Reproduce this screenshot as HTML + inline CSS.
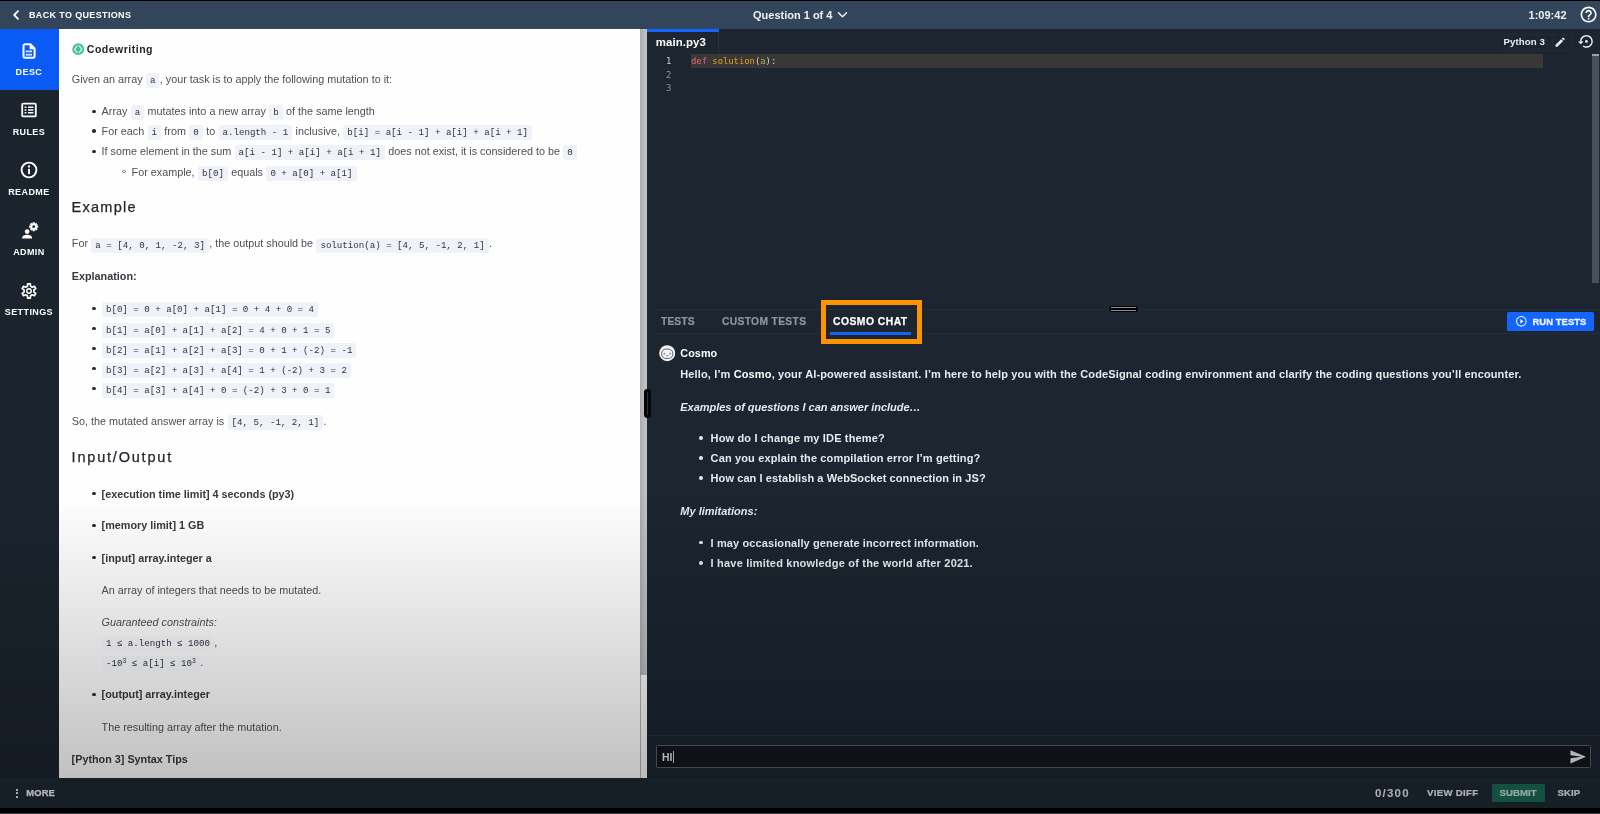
<!DOCTYPE html>
<html lang="en">
<head>
<meta charset="utf-8">
<title>CodeSignal IDE</title>
<style>
*{box-sizing:border-box;margin:0;padding:0}
html,body{width:1600px;height:814px;overflow:hidden;background:#000}
body{position:relative;font-family:"Liberation Sans",sans-serif;color:#fff;-webkit-font-smoothing:antialiased}
.abs{position:absolute}
#app{position:absolute;left:0;top:0;width:1600px;height:814px;will-change:transform;opacity:.999}
.g{font-family:"Liberation Sans",sans-serif;font-weight:bold}
/* header */
#hdr{left:0;top:1px;width:1600px;height:28.3px;background:#34465b}
#hdr .t{position:absolute;white-space:nowrap;line-height:28px;top:-.4px}
/* sidebar */
#side{left:0;top:29px;width:59px;height:749px;background:#1c252e}
.si{position:absolute;left:0;width:59px;height:60px;text-align:center}
.si.on{background:#0b5cf6}
.si svg{position:absolute;left:28.9px;top:13px;transform:translateX(-50%)}
.si span{position:absolute;left:-.6px;width:59px;top:37px;font-size:9px;font-weight:bold;letter-spacing:.4px;line-height:12px}
/* description */
#desc{left:59px;top:29px;width:581px;height:749px;background:#fff;color:#4d5258;font-size:10.8px;overflow:hidden}
#desc .l{position:absolute;white-space:nowrap;line-height:14px}
#desc code{font-family:"Liberation Mono",monospace;font-size:9.14px;background:#f0f3f9;border-radius:2.5px;padding:1.8px 4px 2.3px;margin:0 .35px;color:#30353b}
#desc h2{position:absolute;-webkit-text-stroke:.25px #23282e;font-size:14.5px;font-weight:normal;color:#23282e;white-space:nowrap;line-height:18px}
#desc b{color:#363b41}
#desc .dot{position:absolute;width:3.4px;height:3.4px;border-radius:50%;background:#2b3036}
#desc .ring{position:absolute;width:3.6px;height:3.6px;border-radius:50%;border:.8px solid #6a6f75}
#desc sup{font-size:6.5px;vertical-align:baseline;position:relative;top:-3.2px}
#split{left:640px;top:29px;width:7.3px;height:749px;background:#f8f8f8;border-left:1px solid #b4b4b4}
/* editor */
#ed{left:647px;top:29px;width:953px;height:749px;background:#1d2631}
.t{white-space:nowrap;line-height:12px}
.code{font-family:"DejaVu Sans Mono",monospace;font-size:8.85px;line-height:13.5px;white-space:pre}
.ch{font-size:11px;font-weight:bold;line-height:14px;white-space:nowrap;color:#e9ebee;letter-spacing:.08px}
.ch b{color:#fff}
#foot{left:0;top:778px;width:1600px;height:30.1px;background:#1f2934}
#ov{will-change:transform;left:0;top:0;width:1600px;height:808px;pointer-events:none;background:linear-gradient(to bottom,rgba(0,0,0,0) 498px,rgba(0,0,0,.245) 782px)}
</style>
</head>
<body>
<div id="app">
<div id="hdr" class="abs">
<svg class="abs" style="left:11.6px;top:8.2px" width="8" height="12" viewBox="0 0 8 12"><path d="M6 2.2 L2.2 6 L6 9.8" fill="none" stroke="#fff" stroke-width="1.8" stroke-linecap="round" stroke-linejoin="round"/></svg>
<div class="t g" style="left:29px;font-size:9px;letter-spacing:.35px">BACK TO QUESTIONS</div>
<div class="t g" style="left:753px;font-size:11px;color:#eef1f4">Question 1 of 4</div>
<svg class="abs" style="left:837px;top:10px" width="11" height="8" viewBox="0 0 11 8"><path d="M1.5 1.8 L5.5 5.8 L9.5 1.8" fill="none" stroke="#eef1f4" stroke-width="1.5" stroke-linecap="round" stroke-linejoin="round"/></svg>
<div class="t g" style="left:1528.6px;font-size:11px;color:#eef1f4">1:09:42</div>
<svg class="abs" style="left:1578.7px;top:4.4px" width="19.2" height="19.2" viewBox="0 0 24 24"><path fill="#fff" d="M11 18h2v-2h-2v2zm1-16C6.480 2 2 6.480 2 12s4.480 10 10 10 10-4.480 10-10S17.520 2 12 2zm0 18c-4.410 0-8-3.590-8-8s3.590-8 8-8 8 3.590 8 8-3.590 8-8 8zm0-14c-2.210 0-4 1.790-4 4h2c0-1.100.9-2 2-2s2 .9 2 2c0 2-3 1.750-3 5h2c0-2.250 3-2.500 3-5 0-2.210-1.790-4-4-4z"/></svg>
</div>
<div id="side" class="abs">
<div class="si on" style="top:0;height:60.5px"><svg width="14" height="16.4" viewBox="0 0 14 16.4" style="left:29.3px;top:13.9px"><path d="M3 1.3 h5.4 l4.2 4.2 v7.8 a1.5 1.5 0 0 1 -1.5 1.5 h-8.1 a1.5 1.5 0 0 1 -1.5 -1.5 v-10.5 a1.5 1.5 0 0 1 1.5 -1.500 z" fill="none" stroke="#fff" stroke-width="2" stroke-linejoin="round"/><path d="M8 1.3 L12.6 5.900 H8 Z" fill="#fff" stroke="#fff" stroke-width=".8" stroke-linejoin="round"/><rect x="3.7" y="7.5" width="6.3" height="1.8" fill="#cbe4ff"/><rect x="3.7" y="10.8" width="6.3" height="1.8" fill="#cbe4ff"/></svg><span>DESC</span></div>
<div class="si" style="top:60px"><svg width="16" height="16" viewBox="0 0 16 16"><rect x="1.2" y="1.6" width="13.6" height="12.8" rx="1" fill="none" stroke="#fff" stroke-width="1.8"/><path d="M3.6 5.2h1.8M3.6 8h1.8M3.6 10.8h1.8M7 5.2h5.4M7 8h5.4M7 10.8h5.4" stroke="#fff" stroke-width="1.5"/></svg><span>RULES</span></div>
<div class="si" style="top:120px"><svg width="18" height="18" viewBox="0 0 17 17" style="top:12.4px"><circle cx="8.5" cy="8.5" r="7" fill="none" stroke="#fff" stroke-width="1.8"/><rect x="7.6" y="7.4" width="1.8" height="5" fill="#fff"/><circle cx="8.5" cy="5.2" r="1.1" fill="#fff"/></svg><span>README</span></div>
<div class="si" style="top:180px"><svg width="18" height="18" viewBox="0 0 18 18" style="left:29.8px;top:13.4px"><circle cx="6.1" cy="9.6" r="2.3" fill="#fff"/><path d="M1.1 16.4 c0-2.9 2.2-3.7 5-3.7 s5 .8 5 3.7 z" fill="#fff"/><g transform="translate(12.7 4.7)"><path d="M-0.90 -3.18 L-0.86 -4.32 L0.86 -4.32 L0.90 -3.18 L1.61 -2.88 L2.44 -3.66 L3.66 -2.44 L2.88 -1.61 L3.18 -0.90 L4.32 -0.86 L4.32 0.86 L3.18 0.90 L2.88 1.61 L3.66 2.44 L2.44 3.66 L1.61 2.88 L0.90 3.18 L0.86 4.32 L-0.86 4.32 L-0.90 3.18 L-1.61 2.88 L-2.44 3.66 L-3.66 2.44 L-2.88 1.61 L-3.18 0.90 L-4.32 0.86 L-4.32 -0.86 L-3.18 -0.90 L-2.88 -1.61 L-3.66 -2.44 L-2.44 -3.66 L-1.61 -2.88 Z" fill="#fff" stroke="#fff" stroke-width=".5" stroke-linejoin="round"/><circle r="1.35" fill="#1c252e"/></g></svg><span>ADMIN</span></div>
<div class="si" style="top:240px"><svg width="18" height="18" viewBox="0 0 18 18"><g transform="translate(9 9)"><path d="M-1.59 -4.74 L-1.35 -7.07 L1.35 -7.07 L1.59 -4.74 L3.31 -3.75 L5.45 -4.70 L6.80 -2.37 L4.90 -0.99 L4.90 0.99 L6.80 2.37 L5.45 4.70 L3.31 3.75 L1.59 4.74 L1.35 7.07 L-1.35 7.07 L-1.59 4.74 L-3.31 3.75 L-5.45 4.70 L-6.80 2.37 L-4.90 0.99 L-4.90 -0.99 L-6.80 -2.37 L-5.45 -4.70 L-3.31 -3.75 Z" fill="none" stroke="#fff" stroke-width="1.7" stroke-linejoin="round"/><circle r="2.2" fill="none" stroke="#fff" stroke-width="1.5"/></g></svg><span>SETTINGS</span></div>
</div>
<div id="desc" class="abs">
<svg class="abs" style="left:12.9px;top:14.2px" width="12.4" height="12.4" viewBox="-6.2 -6.2 12.4 12.4"><circle r="5.9" fill="#46bd9d"/><path d="M-1.2 -3.3 L-3.6 0 L-1.2 3.3 M1.2 -3.3 L3.6 0 L1.2 3.3" fill="none" stroke="#b9f5e4" stroke-width="1.5" stroke-linejoin="round" stroke-linecap="round"/></svg>
<div class="l" style="left:27.8px;top:13.3px;font-size:10.5px;font-weight:bold;color:#22262c;letter-spacing:.5px">Codewriting</div>
<div class="l" style="left:12.8px;top:42.8px">Given an array <code>a</code>, your task is to apply the following mutation to it:</div>
<i class="dot" style="left:33.4px;top:80.5px"></i><div class="l" style="left:42.6px;top:75.0px">Array <code>a</code> mutates into a new array <code>b</code> of the same length</div>
<i class="dot" style="left:33.4px;top:100.4px"></i><div class="l" style="left:42.6px;top:94.9px">For each <code>i</code> from <code>0</code> to <code>a.length - 1</code> inclusive, <code>b[i] = a[i - 1] + a[i] + a[i + 1]</code></div>
<i class="dot" style="left:33.4px;top:120.5px"></i><div class="l" style="left:42.6px;top:115.0px">If some element in the sum <code>a[i - 1] + a[i] + a[i + 1]</code> does not exist, it is considered to be <code>0</code></div>
<i class="ring" style="left:63.4px;top:140.9px"></i><div class="l" style="left:72.6px;top:135.6px">For example, <code>b[0]</code> equals <code>0 + a[0] + a[1]</code></div>
<h2 style="left:12.6px;top:169.2px;letter-spacing:1.25px">Example</h2>
<div class="l" style="left:12.8px;top:207.4px">For <code>a = [4, 0, 1, -2, 3]</code>, the output should be <code>solution(a) = [4, 5, -1, 2, 1]</code>.</div>
<div class="l" style="left:12.8px;top:239.7px"><b>Explanation:</b></div>
<i class="dot" style="left:33.4px;top:277.7px"></i><div class="l" style="left:42.6px;top:272.2px"><code>b[0] = 0 + a[0] + a[1] = 0 + 4 + 0 = 4</code></div>
<i class="dot" style="left:33.4px;top:297.8px"></i><div class="l" style="left:42.6px;top:292.3px"><code>b[1] = a[0] + a[1] + a[2] = 4 + 0 + 1 = 5</code></div>
<i class="dot" style="left:33.4px;top:317.9px"></i><div class="l" style="left:42.6px;top:312.4px"><code>b[2] = a[1] + a[2] + a[3] = 0 + 1 + (-2) = -1</code></div>
<i class="dot" style="left:33.4px;top:338.0px"></i><div class="l" style="left:42.6px;top:332.5px"><code>b[3] = a[2] + a[3] + a[4] = 1 + (-2) + 3 = 2</code></div>
<i class="dot" style="left:33.4px;top:358.1px"></i><div class="l" style="left:42.6px;top:352.6px"><code>b[4] = a[3] + a[4] + 0 = (-2) + 3 + 0 = 1</code></div>
<div class="l" style="left:12.8px;top:384.6px">So, the mutated answer array is <code>[4, 5, -1, 2, 1]</code>.</div>
<h2 style="left:12.6px;top:418.8px;letter-spacing:1.8px">Input/Output</h2>
<i class="dot" style="left:33.4px;top:463.0px"></i><div class="l" style="left:42.6px;top:457.5px"><b>[execution time limit] 4 seconds (py3)</b></div>
<i class="dot" style="left:33.4px;top:494.8px"></i><div class="l" style="left:42.6px;top:489.3px"><b>[memory limit] 1 GB</b></div>
<i class="dot" style="left:33.4px;top:527.1px"></i><div class="l" style="left:42.6px;top:521.6px"><b>[input] array.integer a</b></div>
<div class="l" style="left:42.6px;top:553.7px">An array of integers that needs to be mutated.</div>
<div class="l" style="left:42.6px;top:585.7px"><em>Guaranteed constraints:</em></div>
<div class="l" style="left:42.6px;top:605.6px"><code style="background:#fbfcff">1 ≤ a.length ≤ 1000</code>,</div>
<div class="l" style="left:42.6px;top:626.0px"><code style="background:#fbfcff">-10<sup>3</sup> ≤ a[i] ≤ 10<sup>3</sup></code>.</div>
<i class="dot" style="left:33.4px;top:663.8px"></i><div class="l" style="left:42.6px;top:658.3px"><b>[output] array.integer</b></div>
<div class="l" style="left:42.6px;top:690.7px">The resulting array after the mutation.</div>
<div class="l" style="left:12.6px;top:722.8px"><b>[Python 3] Syntax Tips</b></div>
</div>
<div id="split" class="abs"><div class="abs" style="left:-1px;top:0;width:7.3px;height:646.4px;background:linear-gradient(to right,#a7a9ac,#b6b8bb 40%,#c2c4c6)"></div></div>
<div class="abs" style="z-index:5;left:644px;top:389px;width:6.6px;height:28.8px;border-radius:3.3px;background:#050608"><div class="abs" style="left:2.6px;top:2.5px;width:1.4px;height:23.8px;background:#2b3035"></div></div>
<div id="ed" class="abs">
<div class="abs" style="left:0;top:.2px;width:71.5px;height:3.3px;background:#1466ff"></div>
<div class="abs" style="left:71px;top:3px;width:1px;height:22px;background:#27323d"></div>
<div class="abs g t" style="left:8.8px;top:7.2px;font-size:11.4px;letter-spacing:.1px">main.py3</div>
<div class="abs" style="left:850.5px;top:4.5px;width:75.5px;height:17px;border:1px solid #232d38;border-radius:2px"></div>
<div class="abs" style="left:904.6px;top:5px;width:1px;height:16px;background:#222c37"></div>
<div class="abs g t" style="left:856.6px;top:7.4px;font-size:9.7px;color:#eceef1;letter-spacing:.05px">Python 3</div>
<svg class="abs" style="left:907.1px;top:7px" width="12.24" height="12.24" viewBox="0 0 24 24"><path fill="#eceef1" d="M3 17.250V21h3.750L17.810 9.940l-3.750-3.750L3 17.250zM20.710 7.040c.39-.39.39-1.020 0-1.410l-2.340-2.340c-.39-.39-1.020-.39-1.410 0l-1.830 1.830 3.750 3.750 1.830-1.830z"/></svg>
<svg class="abs" style="left:930.7px;top:4.3px" width="16.9" height="16.9" viewBox="0 0 24 24"><path fill="#eceef1" d="M14 12c0-1.1-.9-2-2-2s-2 .9-2 2 .9 2 2 2 2-.9 2-2zm-2-9c-4.97 0-9 4.03-9 9H0l4 4 4-4H5c0-3.870 3.130-7 7-7s7 3.130 7 7-3.130 7-7 7c-1.510 0-2.910-.49-4.060-1.300l-1.420 1.440C8.040 20.300 9.940 21 12 21c4.970 0 9-4.030 9-9s-4.030-9-9-9z"/></svg>
<div class="abs" style="left:43.6px;top:25px;width:852.4px;height:13.5px;background:#3a3938"></div>
<div class="abs code" style="left:19px;top:26.4px;color:#c9ced3">1</div>
<div class="abs code" style="left:19px;top:39.9px;color:#8e969e">2</div>
<div class="abs code" style="left:19px;top:53.4px;color:#8e969e">3</div>
<div class="abs code" style="left:44px;top:26.4px"><span style="color:#e26877">def</span> <span style="color:#e6a023">solution</span><span style="color:#d9d6c4">(</span><span style="color:#a9b665">a</span><span style="color:#d9d6c4">):</span></div>
<div class="abs" style="left:945.3px;top:25px;width:7px;height:229px;background:#48525d"></div>
<div class="abs" style="left:945.3px;top:25px;width:7px;height:2.2px;background:#9aa2aa"></div>
<div class="abs" style="left:6px;top:279.5px;width:947px;height:1px;background:#242f3c"></div>
<div class="abs" style="left:462px;top:276.9px;width:28.9px;height:6.6px;border-radius:3.3px;background:#030405"></div>
<div class="abs" style="left:464.4px;top:278.3px;width:24.4px;height:.7px;background:#8a8f96"></div>
<div class="abs" style="left:464.4px;top:281.3px;width:24.4px;height:.7px;background:#8a8f96"></div>
<div class="abs" style="left:6px;top:304.2px;width:947px;height:1px;background:#242f3c"></div>
<div class="abs g t" style="left:14px;top:287px;font-size:10.3px;color:#8e98a3;letter-spacing:.1px;-webkit-text-stroke:.2px #8e98a3">TESTS</div>
<div class="abs g t" style="left:75px;top:287px;font-size:10.3px;color:#8e98a3;letter-spacing:.32px;-webkit-text-stroke:.2px #8e98a3">CUSTOM TESTS</div>
<div class="abs g t" style="left:186px;top:287px;font-size:10.3px;color:#fff;letter-spacing:.5px;-webkit-text-stroke:.25px #fff">COSMO CHAT</div>
<div class="abs" style="left:183.3px;top:303.2px;width:81px;height:2.5px;background:#1a64f5"></div>
<div class="abs" style="left:174px;top:271px;width:101.2px;height:44.4px;border:5.2px solid #ff9400"></div>
<div class="abs" style="left:860.4px;top:283.4px;width:87px;height:18.7px;background:#1566ff;border-radius:1.5px"></div>
<svg class="abs" style="left:867.5px;top:285.9px" width="12.7" height="12.7" viewBox="0 0 24 24"><path fill="#eaf1ff" d="M10 16.500l6-4.500-6-4.500v9zM12 2C6.480 2 2 6.480 2 12s4.480 10 10 10 10-4.480 10-10S17.520 2 12 2zm0 18c-4.410 0-8-3.590-8-8s3.590-8 8-8 8 3.590 8 8-3.590 8-8 8z"/></svg>
<div class="abs g t" style="left:885.4px;top:286.5px;font-size:9.4px;color:#f2f6ff;letter-spacing:.1px;-webkit-text-stroke:.3px #f2f6ff">RUN TESTS</div>
<svg class="abs" style="left:11.5px;top:316.3px" width="16.4" height="16.4" viewBox="-8.2 -8.2 16.4 16.4"><circle r="8" fill="#f4f5f7"/><rect x="-5.6" y="-4.1" width="11.2" height="9.4" rx="4.4" fill="none" stroke="#3b434d" stroke-width=".8"/><circle cx="-2.8" cy=".5" r=".95" fill="#8d939b"/><circle cx="2.8" cy=".5" r=".95" fill="#8d939b"/><path d="M-1 2.5 Q0 3.5 1 2.5" fill="none" stroke="#59616b" stroke-width=".8" stroke-linecap="round"/></svg>
<div class="abs ch" style="left:33.3px;top:317.2px;font-size:10.8px;color:#fff">Cosmo</div>
<div class="abs ch" style="left:33.3px;top:337.8px;letter-spacing:.13px">Hello, I’m <b>Cosmo</b>, your AI-powered assistant. I’m here to help you with the CodeSignal coding environment and clarify the coding questions you’ll encounter.</div>
<div class="abs ch" style="left:33.3px;top:370.5px;letter-spacing:-.03px"><i>Examples of questions I can answer include…</i></div>
<i class="abs" style="left:52.3px;top:406.8px;width:3.8px;height:3.8px;border-radius:50%;background:#e9ebee"></i><div class="abs ch" style="left:63.6px;top:401.9px;letter-spacing:.15px">How do I change my IDE theme?</div>
<i class="abs" style="left:52.3px;top:427.3px;width:3.8px;height:3.8px;border-radius:50%;background:#e9ebee"></i><div class="abs ch" style="left:63.6px;top:422.4px;letter-spacing:.14px">Can you explain the compilation error I’m getting?</div>
<i class="abs" style="left:52.3px;top:447.1px;width:3.8px;height:3.8px;border-radius:50%;background:#e9ebee"></i><div class="abs ch" style="left:63.6px;top:442.2px">How can I establish a WebSocket connection in JS?</div>
<div class="abs ch" style="left:33.3px;top:474.5px;letter-spacing:0"><i>My limitations:</i></div>
<i class="abs" style="left:52.3px;top:511.5px;width:3.8px;height:3.8px;border-radius:50%;background:#e9ebee"></i><div class="abs ch" style="left:63.6px;top:506.6px;letter-spacing:.11px">I may occasionally generate incorrect information.</div>
<i class="abs" style="left:52.3px;top:532.1px;width:3.8px;height:3.8px;border-radius:50%;background:#e9ebee"></i><div class="abs ch" style="left:63.6px;top:527.2px;letter-spacing:.2px">I have limited knowledge of the world after 2021.</div>
<div class="abs" style="left:2px;top:706px;width:951px;height:1px;background:#243046"></div>
<div class="abs" style="left:9.4px;top:715.8px;width:934.2px;height:23.6px;background:#141920;border:1px solid #56606b;border-radius:1.5px"></div>
<div class="abs g t" style="left:15px;top:722.5px;font-size:10.4px;color:#e4e6e9;letter-spacing:0">HI</div>
<div class="abs" style="left:25.6px;top:722px;width:1px;height:11.5px;background:#cfd3d8"></div>
<svg class="abs" style="left:922.3px;top:718.8px" width="17.7" height="17.7" viewBox="0 0 24 24"><path fill="#e9ebee" d="M2.010 21L23 12 2.010 3 2 10l15 2-15 2z"/></svg>
</div>
<div id="foot" class="abs">
<div class="abs" style="left:5px;top:5.6px;width:58px;height:18.4px;border:1px solid #1f2832;border-radius:2px"></div>
<i class="abs" style="left:16.2px;top:10.8px;width:2.1px;height:2.1px;border-radius:.5px;background:#f0f1f3"></i><i class="abs" style="left:16.2px;top:14.4px;width:2.1px;height:2.1px;border-radius:.5px;background:#f0f1f3"></i><i class="abs" style="left:16.2px;top:18px;width:2.1px;height:2.1px;border-radius:.5px;background:#f0f1f3"></i>
<div class="abs g t" style="left:26.3px;top:9px;font-size:9.4px;color:#eef0f2;letter-spacing:.12px;-webkit-text-stroke:.25px #eef0f2">MORE</div>
<div class="abs g t" style="left:1375px;top:8.6px;font-size:11.5px;color:#e6e8eb;letter-spacing:1.2px">0/300</div>
<div class="abs" style="left:1419.5px;top:5.8px;width:66px;height:18px;border:1px solid #222b36;border-radius:2px"></div>
<div class="abs g t" style="left:1427px;top:9px;font-size:9.6px;color:#e6e8eb;letter-spacing:.33px;-webkit-text-stroke:.2px currentColor">VIEW DIFF</div>
<div class="abs" style="left:1492px;top:5.8px;width:52.5px;height:18px;background:#1b6b55;border-radius:1.5px"></div>
<div class="abs g t" style="left:1499.5px;top:9px;font-size:9.6px;color:#c2e0d5;letter-spacing:.05px;-webkit-text-stroke:.2px currentColor">SUBMIT</div>
<div class="abs" style="left:1550.8px;top:5.8px;width:36.4px;height:18px;border:1px solid #222b36;border-radius:2px"></div>
<div class="abs g t" style="left:1557.6px;top:9px;font-size:9.6px;color:#e6e8eb;letter-spacing:.08px;-webkit-text-stroke:.2px currentColor">SKIP</div>
</div>
<div id="ov" class="abs"></div>
<div class="abs" style="left:0;top:813px;width:1600px;height:1px;background:#3c3c3c"></div>
</div>
</body>
</html>
